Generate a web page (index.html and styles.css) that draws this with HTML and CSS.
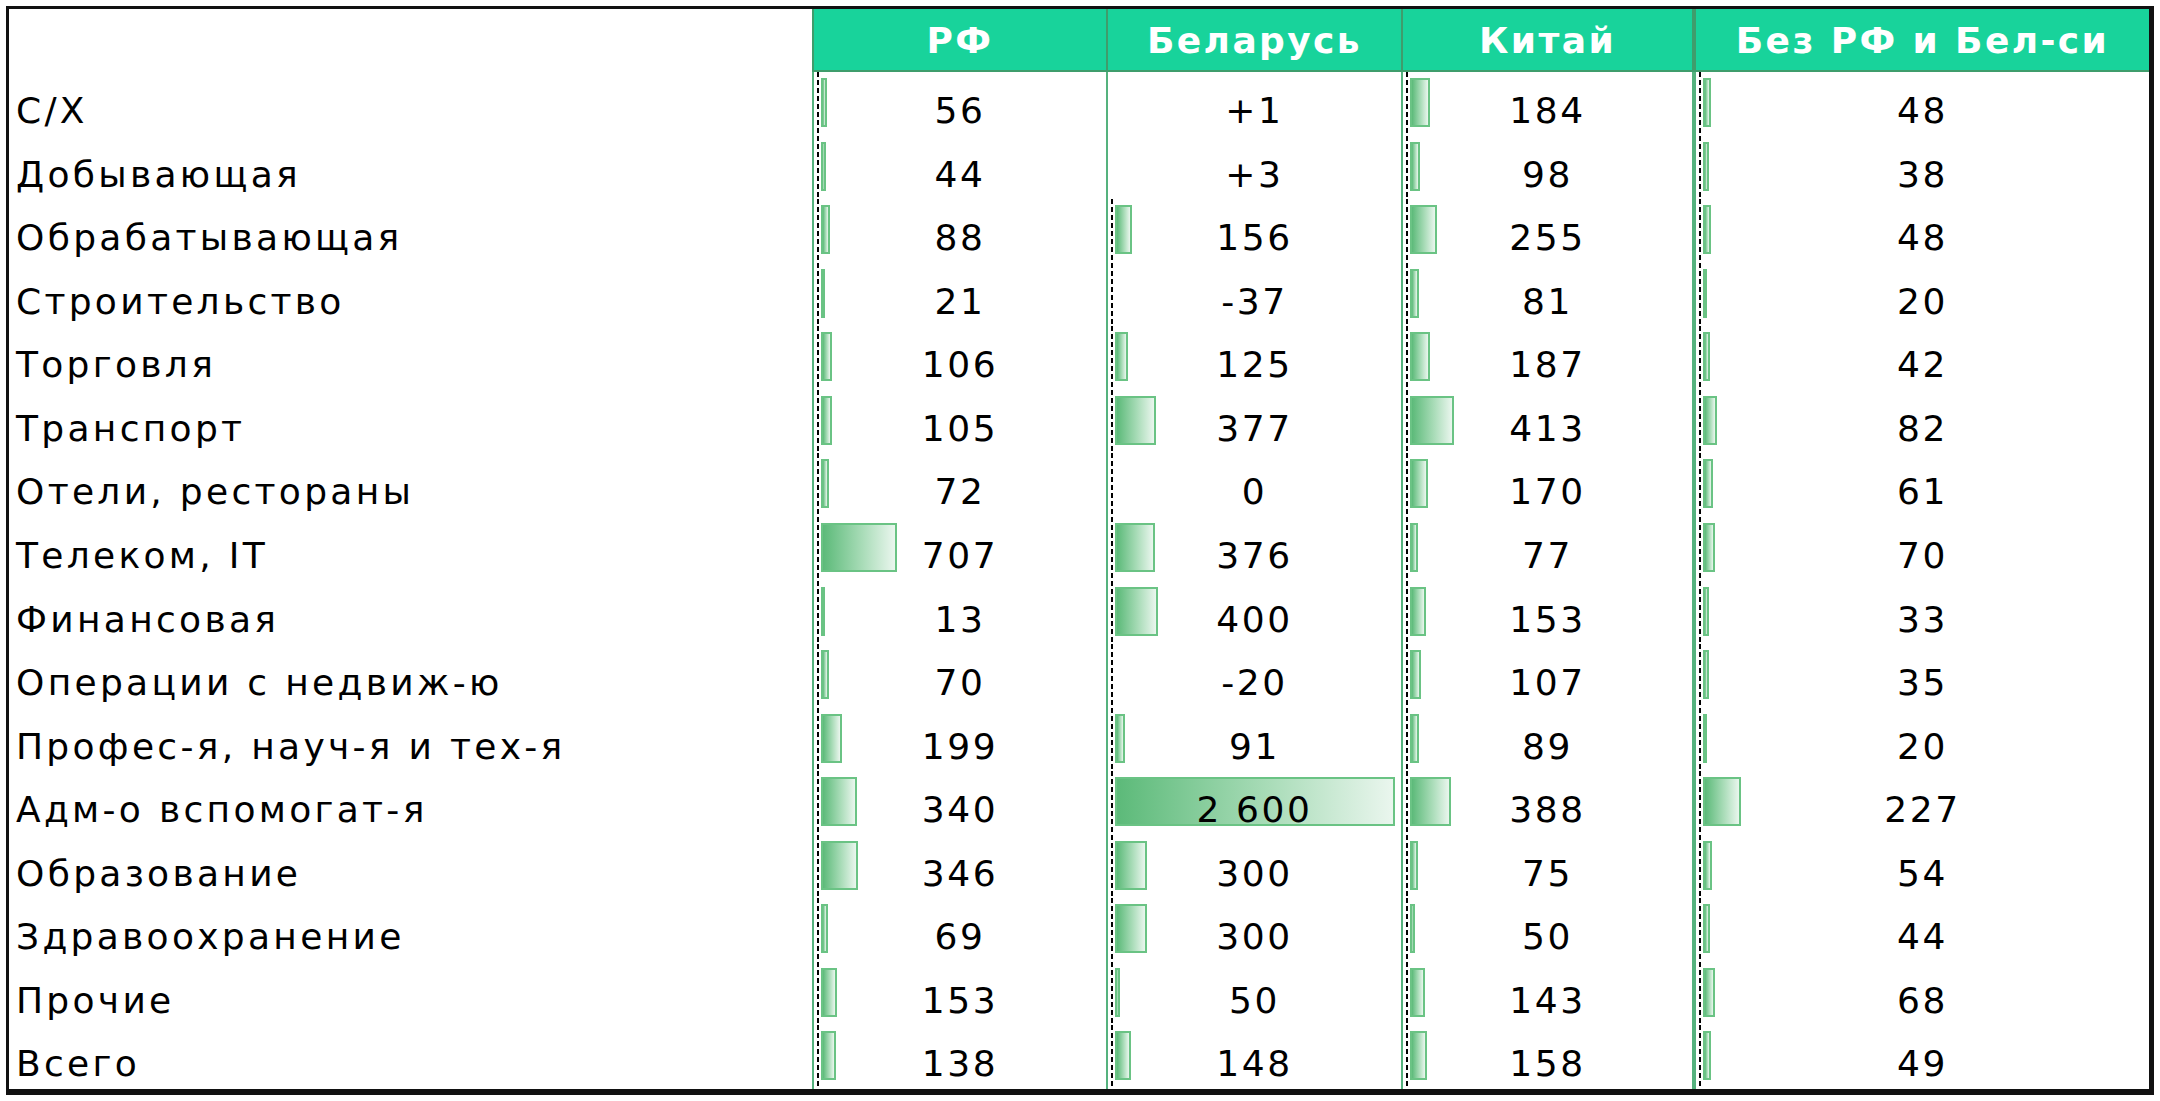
FILE: index.html
```html
<!DOCTYPE html>
<html lang="ru">
<head>
<meta charset="utf-8">
<title>Таблица</title>
<link rel="stylesheet" href="styles.css">
</head>
<body>
<div class="sheet">
  <div class="h h-blank"></div>
  <div class="h">РФ</div>
  <div class="h">Беларусь</div>
  <div class="h">Китай</div>
  <div class="h h-last">Без РФ и Бел-си</div>

  <div class="lbl">С/Х</div>
  <div class="c"><i class="ax"></i><i class="tr"><i class="bar" style="width:2.154%"></i></i><span>56</span></div>
  <div class="c"><span>+1</span></div>
  <div class="c"><i class="ax"></i><i class="tr"><i class="bar" style="width:7.077%"></i></i><span>184</span></div>
  <div class="c c-last"><i class="ax"></i><i class="tr"><i class="bar" style="width:1.846%"></i></i><span>48</span></div>

  <div class="lbl">Добывающая</div>
  <div class="c"><i class="ax"></i><i class="tr"><i class="bar" style="width:1.692%"></i></i><span>44</span></div>
  <div class="c"><span>+3</span></div>
  <div class="c"><i class="ax"></i><i class="tr"><i class="bar" style="width:3.769%"></i></i><span>98</span></div>
  <div class="c c-last"><i class="ax"></i><i class="tr"><i class="bar" style="width:1.462%"></i></i><span>38</span></div>

  <div class="lbl">Обрабатывающая</div>
  <div class="c"><i class="ax"></i><i class="tr"><i class="bar" style="width:3.385%"></i></i><span>88</span></div>
  <div class="c"><i class="ax"></i><i class="tr"><i class="bar" style="width:6%"></i></i><span>156</span></div>
  <div class="c"><i class="ax"></i><i class="tr"><i class="bar" style="width:9.808%"></i></i><span>255</span></div>
  <div class="c c-last"><i class="ax"></i><i class="tr"><i class="bar" style="width:1.846%"></i></i><span>48</span></div>

  <div class="lbl">Строительство</div>
  <div class="c"><i class="ax"></i><i class="tr"><i class="bar" style="width:0.808%"></i></i><span>21</span></div>
  <div class="c"><i class="ax"></i><span>-37</span></div>
  <div class="c"><i class="ax"></i><i class="tr"><i class="bar" style="width:3.115%"></i></i><span>81</span></div>
  <div class="c c-last"><i class="ax"></i><i class="tr"><i class="bar" style="width:0.769%"></i></i><span>20</span></div>

  <div class="lbl">Торговля</div>
  <div class="c"><i class="ax"></i><i class="tr"><i class="bar" style="width:4.077%"></i></i><span>106</span></div>
  <div class="c"><i class="ax"></i><i class="tr"><i class="bar" style="width:4.808%"></i></i><span>125</span></div>
  <div class="c"><i class="ax"></i><i class="tr"><i class="bar" style="width:7.192%"></i></i><span>187</span></div>
  <div class="c c-last"><i class="ax"></i><i class="tr"><i class="bar" style="width:1.615%"></i></i><span>42</span></div>

  <div class="lbl">Транспорт</div>
  <div class="c"><i class="ax"></i><i class="tr"><i class="bar" style="width:4.038%"></i></i><span>105</span></div>
  <div class="c"><i class="ax"></i><i class="tr"><i class="bar" style="width:14.5%"></i></i><span>377</span></div>
  <div class="c"><i class="ax"></i><i class="tr"><i class="bar" style="width:15.885%"></i></i><span>413</span></div>
  <div class="c c-last"><i class="ax"></i><i class="tr"><i class="bar" style="width:3.154%"></i></i><span>82</span></div>

  <div class="lbl">Отели, рестораны</div>
  <div class="c"><i class="ax"></i><i class="tr"><i class="bar" style="width:2.769%"></i></i><span>72</span></div>
  <div class="c"><i class="ax"></i><span>0</span></div>
  <div class="c"><i class="ax"></i><i class="tr"><i class="bar" style="width:6.538%"></i></i><span>170</span></div>
  <div class="c c-last"><i class="ax"></i><i class="tr"><i class="bar" style="width:2.346%"></i></i><span>61</span></div>

  <div class="lbl">Телеком, IT</div>
  <div class="c"><i class="ax"></i><i class="tr"><i class="bar" style="width:27.192%"></i></i><span>707</span></div>
  <div class="c"><i class="ax"></i><i class="tr"><i class="bar" style="width:14.462%"></i></i><span>376</span></div>
  <div class="c"><i class="ax"></i><i class="tr"><i class="bar" style="width:2.962%"></i></i><span>77</span></div>
  <div class="c c-last"><i class="ax"></i><i class="tr"><i class="bar" style="width:2.692%"></i></i><span>70</span></div>

  <div class="lbl">Финансовая</div>
  <div class="c"><i class="ax"></i><i class="tr"><i class="bar" style="width:0.5%"></i></i><span>13</span></div>
  <div class="c"><i class="ax"></i><i class="tr"><i class="bar" style="width:15.385%"></i></i><span>400</span></div>
  <div class="c"><i class="ax"></i><i class="tr"><i class="bar" style="width:5.885%"></i></i><span>153</span></div>
  <div class="c c-last"><i class="ax"></i><i class="tr"><i class="bar" style="width:1.269%"></i></i><span>33</span></div>

  <div class="lbl">Операции с недвиж-ю</div>
  <div class="c"><i class="ax"></i><i class="tr"><i class="bar" style="width:2.692%"></i></i><span>70</span></div>
  <div class="c"><i class="ax"></i><span>-20</span></div>
  <div class="c"><i class="ax"></i><i class="tr"><i class="bar" style="width:4.115%"></i></i><span>107</span></div>
  <div class="c c-last"><i class="ax"></i><i class="tr"><i class="bar" style="width:1.346%"></i></i><span>35</span></div>

  <div class="lbl">Профес-я, науч-я и тех-я</div>
  <div class="c"><i class="ax"></i><i class="tr"><i class="bar" style="width:7.654%"></i></i><span>199</span></div>
  <div class="c"><i class="ax"></i><i class="tr"><i class="bar" style="width:3.5%"></i></i><span>91</span></div>
  <div class="c"><i class="ax"></i><i class="tr"><i class="bar" style="width:3.423%"></i></i><span>89</span></div>
  <div class="c c-last"><i class="ax"></i><i class="tr"><i class="bar" style="width:0.769%"></i></i><span>20</span></div>

  <div class="lbl">Адм-о вспомогат-я</div>
  <div class="c"><i class="ax"></i><i class="tr"><i class="bar" style="width:13.077%"></i></i><span>340</span></div>
  <div class="c"><i class="ax"></i><i class="tr"><i class="bar" style="width:100%"></i></i><span>2 600</span></div>
  <div class="c"><i class="ax"></i><i class="tr"><i class="bar" style="width:14.923%"></i></i><span>388</span></div>
  <div class="c c-last"><i class="ax"></i><i class="tr"><i class="bar" style="width:8.731%"></i></i><span>227</span></div>

  <div class="lbl">Образование</div>
  <div class="c"><i class="ax"></i><i class="tr"><i class="bar" style="width:13.308%"></i></i><span>346</span></div>
  <div class="c"><i class="ax"></i><i class="tr"><i class="bar" style="width:11.538%"></i></i><span>300</span></div>
  <div class="c"><i class="ax"></i><i class="tr"><i class="bar" style="width:2.885%"></i></i><span>75</span></div>
  <div class="c c-last"><i class="ax"></i><i class="tr"><i class="bar" style="width:2.077%"></i></i><span>54</span></div>

  <div class="lbl">Здравоохранение</div>
  <div class="c"><i class="ax"></i><i class="tr"><i class="bar" style="width:2.654%"></i></i><span>69</span></div>
  <div class="c"><i class="ax"></i><i class="tr"><i class="bar" style="width:11.538%"></i></i><span>300</span></div>
  <div class="c"><i class="ax"></i><i class="tr"><i class="bar" style="width:1.923%"></i></i><span>50</span></div>
  <div class="c c-last"><i class="ax"></i><i class="tr"><i class="bar" style="width:1.692%"></i></i><span>44</span></div>

  <div class="lbl">Прочие</div>
  <div class="c"><i class="ax"></i><i class="tr"><i class="bar" style="width:5.885%"></i></i><span>153</span></div>
  <div class="c"><i class="ax"></i><i class="tr"><i class="bar" style="width:1.923%"></i></i><span>50</span></div>
  <div class="c"><i class="ax"></i><i class="tr"><i class="bar" style="width:5.5%"></i></i><span>143</span></div>
  <div class="c c-last"><i class="ax"></i><i class="tr"><i class="bar" style="width:2.615%"></i></i><span>68</span></div>

  <div class="lbl">Всего</div>
  <div class="c"><i class="ax"></i><i class="tr"><i class="bar" style="width:5.308%"></i></i><span>138</span></div>
  <div class="c"><i class="ax"></i><i class="tr"><i class="bar" style="width:5.692%"></i></i><span>148</span></div>
  <div class="c"><i class="ax"></i><i class="tr"><i class="bar" style="width:6.077%"></i></i><span>158</span></div>
  <div class="c c-last"><i class="ax"></i><i class="tr"><i class="bar" style="width:1.885%"></i></i><span>49</span></div>
</div>
</body>
</html>
```

FILE: styles.css
```css
html, body {
  margin: 0;
  padding: 0;
  background: #ffffff;
}

body {
  font-family: "DejaVu Sans", Verdana, sans-serif;
  color: #000000;
}

.sheet {
  margin: 6px 0 0 6px;
  width: 2148px;
  height: 1089px;
  box-sizing: border-box;
  border-style: solid;
  border-color: #111111;
  border-width: 3px 5px 6px 3px;
  display: grid;
  grid-template-columns: 803px 294px 295px 291px 1fr;
  grid-template-rows: 63px repeat(16, 1fr);
  font-size: 36px;
  letter-spacing: 2.6px;
}

.h {
  background: #18d39b;
  color: #ffffff;
  font-weight: bold;
  text-align: center;
  box-sizing: border-box;
  border-left: 2px solid #3f9d6c;
  border-bottom: 2px solid #3f9d6c;
  padding-top: 2px;
  line-height: 59px;
  white-space: nowrap;
  letter-spacing: 2.4px;
}

.h-blank {
  background: #ffffff;
  border: none;
}

.h-last {
  border-left-width: 4px;
}

.lbl {
  padding: 14px 0 0 7px;
  line-height: 49px;
  white-space: nowrap;
  letter-spacing: 3.3px;
}

.c {
  position: relative;
  box-sizing: border-box;
  border-left: 2px solid #55b27e;
  padding-top: 14px;
  line-height: 49px;
  text-align: center;
  white-space: nowrap;
}

.c-last {
  border-left-width: 4px;
}

.c span {
  position: relative;
}

.ax {
  position: absolute;
  left: 3px;
  top: 0;
  bottom: 0;
  width: 2px;
  background: repeating-linear-gradient(to bottom, #000000 0 5px, transparent 5px 8px);
}

.tr {
  position: absolute;
  left: 7px;
  right: 6px;
  top: 6px;
  height: 49px;
}

.bar {
  display: block;
  height: 100%;
  box-sizing: border-box;
  border: 2px solid #6ac384;
  background: linear-gradient(to right, #5cba79 0%, #a9dcb8 55%, #eaf6ee 100%);
}
```
